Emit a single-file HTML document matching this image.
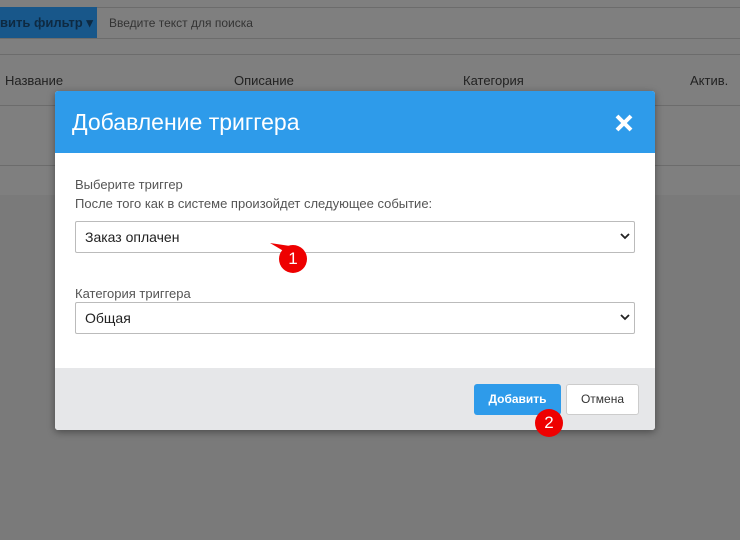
<!DOCTYPE html>
<html><head><meta charset="utf-8"><style>
html,body{margin:0;padding:0}
body{width:740px;height:540px;overflow:hidden;font-family:"Liberation Sans",sans-serif;position:relative}
.a{position:absolute}
.modal{left:55px;top:91px;width:600px;height:339px;background:#fff;border-radius:3px;box-shadow:0 2px 8px rgba(0,0,0,.4);overflow:hidden}
.hd{left:0;top:0;width:600px;height:62px;background:#2e9bea;color:#fff;font-size:23px}
.lbl{font-size:13px;color:#555}
.sel{left:20px;width:549px;height:30px;border:1px solid #bbb;border-radius:2px;font-size:14px;color:#222;line-height:30px;padding-left:9px}
.ft{left:0;top:277px;width:600px;height:62px;background:#e6e7e9}
.b{font-size:12px;text-align:center;border-radius:3px;line-height:31px;height:31px}
.badge{width:28px;height:28px;border-radius:50%;background:#e00;color:#fff;font-size:17px;text-align:center;line-height:28px}
</style></head><body>
<svg class="a" style="left:0;top:0" width="740" height="540" font-family="Liberation Sans, sans-serif">
<rect x="0" y="0" width="740" height="540" fill="#7a7a7a"/>
<rect x="0" y="0" width="740" height="195" fill="#7f7f7f"/>
<rect x="0" y="7" width="740" height="1" fill="#6c6c6c"/>
<rect x="0" y="38" width="740" height="1" fill="#6c6c6c"/>
<rect x="0" y="54" width="740" height="1" fill="#6c6c6c"/>
<rect x="0" y="105" width="740" height="1" fill="#6c6c6c"/>
<rect x="0" y="165" width="740" height="1" fill="#6c6c6c"/>
<rect x="0" y="7" width="97" height="31" fill="#18578a"/>
<text x="0" y="27" font-size="13" font-weight="bold" fill="#0e2a42">вить фильтр ▾</text>
<text x="109" y="27" font-size="12" fill="#333">Введите текст для поиска</text>
<text x="5" y="85" font-size="13" fill="#222">Название</text>
<text x="234" y="85" font-size="13" fill="#222">Описание</text>
<text x="463" y="85" font-size="13" fill="#222">Категория</text>
<text x="690" y="85" font-size="13" fill="#222">Актив.</text>
</svg>
<div class="a modal">
 <div class="a hd"><span class="a" style="left:17px;top:18px">Добавление триггера</span>
  <svg class="a" style="left:559px;top:22px" width="20" height="20"><path d="M3 3L17 17M17 3L3 17" stroke="#fff" stroke-width="4"/></svg></div>
 <div class="a lbl" style="left:20px;top:86px">Выберите триггер</div>
 <div class="a lbl" style="left:20px;top:105px">После того как в системе произойдет следующее событие:</div>
 <div class="a sel" style="top:130px">Заказ оплачен</div>
 <svg class="a" style="left:565px;top:142px" width="10" height="7"><path d="M1 1L5 5L9 1" stroke="#222" stroke-width="1.8" fill="none"/></svg>
 <div class="a lbl" style="left:20px;top:195px">Категория триггера</div>
 <div class="a sel" style="top:211px">Общая</div>
 <svg class="a" style="left:565px;top:223px" width="10" height="7"><path d="M1 1L5 5L9 1" stroke="#222" stroke-width="1.8" fill="none"/></svg>
 <div class="a ft"></div>
 <div class="a b" style="left:419px;top:293px;width:87px;background:#2e9bea;color:#fff;font-weight:bold">Добавить</div>
 <div class="a b" style="left:511px;top:293px;width:71px;background:#fff;border:1px solid #ccc;height:29px;line-height:29px;color:#333">Отмена</div>
</div>
<svg class="a" style="left:268px;top:240px" width="30" height="20"><path d="M2 3L22 6L24 16Z" fill="#e00"/></svg>
<div class="a badge" style="left:279px;top:245px">1</div>
<div class="a badge" style="left:535px;top:409px">2</div>
</body></html>
